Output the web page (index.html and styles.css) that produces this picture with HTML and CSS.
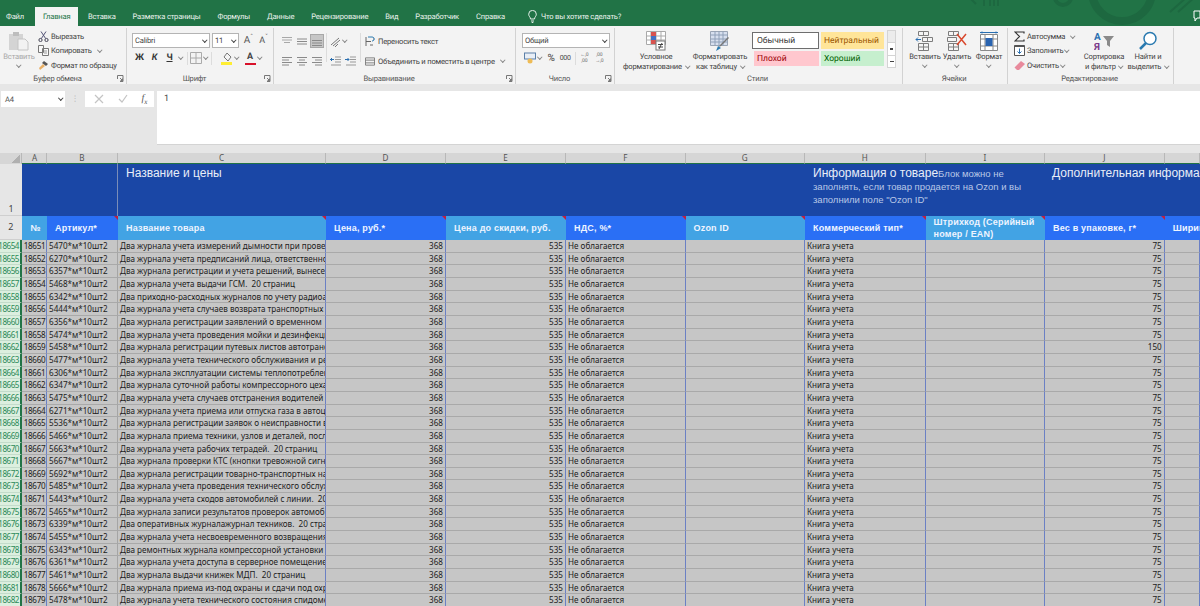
FILE: index.html
```html
<!DOCTYPE html>
<html lang="ru">
<head>
<meta charset="UTF-8">
<title>Excel - Главная</title>
<link rel="stylesheet" href="styles.css">
</head>
<body>
<svg class="defs" width="0" height="0">
  <symbol id="launch" viewBox="0 0 7 7"><path d="M.5 4V.5h5.500v6H3M3 3l2.500 2.500M3.500 5.500h2v-2" fill="none" stroke="#777"/></symbol>
  <symbol id="lines-l" viewBox="0 0 12 10"><path d="M1 1.500h10M1 4h7M1 6.500h10M1 9h7" stroke="#8a8a8a" fill="none"/></symbol>
  <symbol id="lines-c" viewBox="0 0 12 10"><path d="M1 1.500h10M3 4h6M1 6.500h10M3 9h6" stroke="#8a8a8a" fill="none"/></symbol>
  <symbol id="lines-r" viewBox="0 0 12 10"><path d="M1 1.500h10M4 4h7M1 6.500h10M4 9h7" stroke="#8a8a8a" fill="none"/></symbol>
</svg>

<div class="top">
  <svg class="top-art" width="1200" height="26">
    <g fill="none" stroke="#1d6840">
      <circle cx="1122" cy="-9" r="30" stroke-width="8"/>
      <circle cx="1063" cy="-3" r="8" stroke-width="4"/>
      <path d="M970-2l6 6M984 6V-2M990 6V-2M994 6V-2M998 6V-2M1170 12l18-16M1178 12l18-16" stroke-width="2"/>
    </g>
    <path d="M1194 11h6v7h-3l-2 3v-3h-1z" fill="none" stroke="#fff"/>
  </svg>
  <nav class="tabs">
    <span class="tab tab-file">Файл</span>
    <span class="tab active">Главная</span>
    <span class="tab">Вставка</span>
    <span class="tab">Разметка страницы</span>
    <span class="tab">Формулы</span>
    <span class="tab">Данные</span>
    <span class="tab">Рецензирование</span>
    <span class="tab">Вид</span>
    <span class="tab">Разработчик</span>
    <span class="tab">Справка</span>
    <span class="tab tab-tell">
      <svg width="9" height="13" viewBox="0 0 9 13"><path d="M2.500 9C2.500 7 .7 6.500.7 4.200a3.800 3.800 0 0 1 7.600 0C8.300 6.500 6.500 7 6.500 9zM3 11h3M3.700 12.500h1.600" fill="none" stroke="#e6f0ea"/></svg>
      Что вы хотите сделать?
    </span>
  </nav>
</div>

<div class="ribbon">
  <section class="group g-clip">
    <div class="group-body">
      <div class="big paste">
        <svg width="22" height="20" viewBox="0 0 22 20"><rect x="1" y="3" width="14" height="16" fill="#d4d4d4"/><rect x="5" y="1" width="6" height="4" fill="#bdbdbd"/><path d="M10 8h7l3 3v8H10z" fill="#f2f2f2" stroke="#c4c4c4"/></svg>
        <span>Вставить</span>
        <i class="caret"></i>
      </div>
      <div class="small-col">
        <div class="small">
          <svg width="11" height="11" viewBox="0 0 11 11"><circle cx="2.500" cy="9" r="1.600" fill="none" stroke="#445"/><circle cx="8.500" cy="9" r="1.600" fill="none" stroke="#445"/><path d="M3.300 7.600L8 .5M7.700 7.600L3 .5" stroke="#557" fill="none"/></svg>
          Вырезать
        </div>
        <div class="small">
          <svg width="11" height="11" viewBox="0 0 11 11"><path d="M.5.500h5v7h-5zM4.500 3.500h6v7h-6z" fill="#f8f8f8" stroke="#777"/><path d="M6 6h3M6 8h3" stroke="#999"/></svg>
          Копировать <i class="caret gap"></i>
        </div>
        <div class="small">
          <svg width="11" height="11" viewBox="0 0 11 11"><path d="M6 1l4 3-2 2-4-3z" fill="#555"/><path d="M5 4L1 8l1 2 5-4z" fill="#e9b066"/></svg>
          Формат по образцу
        </div>
      </div>
    </div>
    <div class="group-foot"><span>Буфер обмена</span><svg class="launch"><use href="#launch"/></svg></div>
  </section>

  <section class="group g-font">
    <div class="group-body stack">
      <div class="line">
        <div class="combo font-name">Calibri<i class="caret dark"></i></div>
        <div class="combo font-size">11<i class="caret dark"></i></div>
        <span class="grow">A<sup>ˆ</sup></span>
        <span class="grow small-a">A<sup>ˇ</sup></span>
      </div>
      <div class="line line-tools">
        <b class="tool">Ж</b>
        <b class="tool it">К</b>
        <b class="tool un">Ч</b><i class="caret"></i>
        <i class="sep"></i>
        <svg width="12" height="12" viewBox="0 0 12 12"><path d="M.5.500h11v11H.500zM6 .5v11M.5 6h11" fill="none" stroke="#aaa"/></svg><i class="caret"></i>
        <i class="sep"></i>
        <svg class="ml" width="12" height="13" viewBox="0 0 12 13"><path d="M6 1l4 4-3 4-4-4z" fill="#f4f4f4" stroke="#777"/><rect y="10" width="11" height="3" fill="#ffee33"/></svg><i class="caret"></i>
        <span class="font-color">A</span><i class="caret"></i>
      </div>
    </div>
    <div class="group-foot"><span>Шрифт</span><svg class="launch"><use href="#launch"/></svg></div>
  </section>

  <section class="group g-align">
    <div class="group-body g-align-body">
      <div class="align-grid">
        <svg width="12" height="10"><path d="M1 1.500h10M1 4h10M3 6.500h6" stroke="#a8a8a8"/></svg>
        <svg width="12" height="10"><path d="M1 3h10M1 5.500h10M1 8h10" stroke="#8a8a8a"/></svg>
        <span class="align-on"><svg width="10" height="10"><path d="M0 4.500h10M0 7h10M0 9.500h10" stroke="#8a8a8a"/></svg></span>
        <svg width="12" height="10"><use href="#lines-l"/></svg>
        <svg width="12" height="10"><use href="#lines-c"/></svg>
        <svg width="12" height="10"><use href="#lines-r"/></svg>
      </div>
      <i class="sep tall"></i>
      <div class="indent-grid">
        <div class="orient"><svg width="11" height="11" viewBox="0 0 11 11"><path d="M1 9l8-7M3 10l7-6M5 11l3-3" stroke="#777" fill="none"/></svg><i class="caret"></i></div>
        <div class="indents">
          <svg width="11" height="10" viewBox="0 0 11 10"><path d="M5 1h6M5 3.500h6M5 6h6M1 9h10" stroke="#999"/><path d="M4 3.500H0M2 2L.5 3.500 2 5" stroke="#2a6fb0" fill="none"/></svg>
          <svg width="11" height="10" viewBox="0 0 11 10"><path d="M5 1h6M5 3.500h6M5 6h6M1 9h10" stroke="#999"/><path d="M0 3.500h4M2.500 2L4 3.500 2.500 5" stroke="#2a6fb0" fill="none"/></svg>
        </div>
      </div>
      <i class="sep tall"></i>
      <div class="small-col wide">
        <div class="small"><svg width="10" height="11" viewBox="0 0 10 11"><path d="M1 1v9M1 5.500h5M8 3h1M5 9h3" stroke="#666" fill="none"/><path d="M3 1h4c3 0 3 4 0 4" stroke="#2a7ab0" fill="none"/></svg>Переносить текст</div>
        <div class="small"><svg width="10" height="11" viewBox="0 0 11 11"><path d="M.5 1.500h10v8H.500zM.5 4h10M.5 7h10" fill="none" stroke="#777"/></svg>Объединить и поместить в центре <i class="caret gap"></i></div>
      </div>
    </div>
    <div class="group-foot"><span>Выравнивание</span><svg class="launch"><use href="#launch"/></svg></div>
  </section>

  <section class="group g-num">
    <div class="group-body stack">
      <div class="line"><div class="combo num-format">Общий<i class="caret dark"></i></div></div>
      <div class="line line-num">
        <svg width="12" height="12" viewBox="0 0 12 12"><rect x=".5" y="1" width="11" height="6" fill="#e8eef6" stroke="#5a7fa8"/><circle cx="6" cy="9" r="2.500" fill="#eebb55"/></svg><i class="caret"></i>
        <span class="pct">%</span>
        <span class="thou">000</span>
        <i class="sep"></i>
        <span class="dec">←,0<br>,00</span>
        <span class="dec">,00<br>→,0</span>
      </div>
    </div>
    <div class="group-foot"><span>Число</span><svg class="launch"><use href="#launch"/></svg></div>
  </section>

  <section class="group g-styles">
    <div class="group-body">
      <div class="big cond">
        <svg width="20" height="20" viewBox="0 0 20 20"><path d="M.5.500h19v13H.500zM5 .5v13M10 .5v13M15 .5v13M.5 5h19M.5 9h19" fill="#fff" stroke="#a9a9a9"/><rect x="5" y="1" width="5" height="4" fill="#d9534f"/><rect x="5" y="5" width="5" height="4" fill="#4472c4"/><rect x="5" y="9" width="5" height="4" fill="#d9534f"/><rect x="10" y="10" width="9" height="9" fill="#fff" stroke="#777"/><path d="M12 13.500h5M12 16h5M16 12l-3 6" stroke="#444" fill="none"/></svg>
        <span>Условное</span>
        <span>форматирование <i class="caret"></i></span>
      </div>
      <div class="big table-fmt">
        <svg width="20" height="20" viewBox="0 0 20 20"><path d="M.5.500h17v14H.500z" fill="#d7dfee" stroke="#9aa5b5"/><path d="M.5 4h17M.5 8h17M.5 11h17M5 .5v14M9 .5v14M13 .5v14" stroke="#8fa0b8" fill="none"/><path d="M19 7l-8 8-2 1 1-2 8-8z" fill="#777"/><path d="M8 15l3 2-5 3z" fill="#2a7ab0"/></svg>
        <span>Форматировать</span>
        <span>как таблицу <i class="caret"></i></span>
      </div>
      <div class="style-grid">
        <div class="st st-normal">Обычный</div>
        <div class="st st-neutral">Нейтральный</div>
        <div class="st st-bad">Плохой</div>
        <div class="st st-good">Хороший</div>
      </div>
      <div class="style-scroll"><i class="up"></i><i class="dn"></i><i class="more"></i></div>
    </div>
    <div class="group-foot center"><span>Стили</span></div>
  </section>

  <section class="group g-cells">
    <div class="group-body">
      <div class="big cell-btn">
        <svg width="20" height="20" viewBox="0 0 20 20"><path d="M3.500.5h10v4h-10zM8.500.5v4M7.500 6.500h10v4h-10zM12.500 6.500v4M3.500 12.500h10v7h-10zM3.500 16h10M8.500 12.500v7" fill="#f5f5f5" stroke="#7d7d7d"/><path d="M6 8.500H1M3 6.500l-2 2 2 2" stroke="#2a6fb0" fill="none"/></svg>
        <span>Вставить</span>
        <i class="caret"></i>
      </div>
      <div class="big cell-btn">
        <svg width="20" height="20" viewBox="0 0 20 20"><path d="M1.500.5h10v4h-10zM6.500.5v4M.5 6.500h9v4h-9zM1.500 12.500h10v7h-10zM1.500 16h10M6.500 12.500v7" fill="#f5f5f5" stroke="#7d7d7d"/><path d="M10 3l9 11M19 3l-9 11" stroke="#d9492e" stroke-width="1.500"/></svg>
        <span>Удалить</span>
        <i class="caret"></i>
      </div>
      <div class="big cell-btn">
        <svg width="20" height="20" viewBox="0 0 20 20"><path d="M1 1.500h18M3 .5v2M17 .5v2" stroke="#2a6fb0"/><path d="M1.500 3.500h17v16h-17zM6 3.500v16M14 3.500v16M1.500 8h17M1.500 15h17" fill="#fff" stroke="#8a8a8a"/><rect x="6.500" y="7" width="7" height="8" fill="#2a64b0"/></svg>
        <span>Формат</span>
        <i class="caret"></i>
      </div>
    </div>
    <div class="group-foot center"><span>Ячейки</span></div>
  </section>

  <section class="group g-edit">
    <div class="group-body">
      <div class="small-col edit-col">
        <div class="small"><svg width="11" height="11" viewBox="0 0 11 11"><path d="M10 2.500V1H1l4.500 4.500L1 10h9V8.500" fill="none" stroke="#333" stroke-width="1.200"/></svg>Автосумма <i class="caret gap"></i></div>
        <div class="small"><svg width="11" height="11" viewBox="0 0 11 11"><path d="M.5.500h10v10H.500z" fill="#fff" stroke="#555"/><path d="M.5.500h10V2H.500z" fill="#555"/><path d="M5.500 3.500v5M3.500 6.500l2 2 2-2" fill="none" stroke="#2a6fb0"/></svg>Заполнить <i class="caret"></i></div>
        <div class="small"><svg width="11" height="11" viewBox="0 0 11 11"><path d="M7 1l4 3-6 6H3L.5 7.500z" fill="#e88a9c"/></svg>Очистить <i class="caret"></i></div>
      </div>
      <div class="big sort">
        <svg width="20" height="20" viewBox="0 0 20 20"><text x="0" y="9" class="az a">А</text><text x="0" y="19" class="az z">Я</text><path d="M9 5h11l-4 5v6l-3-2v-4z" fill="#8a8a8a"/></svg>
        <span>Сортировка</span>
        <span>и фильтр <i class="caret"></i></span>
      </div>
      <div class="big find">
        <svg width="20" height="20" viewBox="0 0 20 20"><circle cx="12" cy="7.500" r="6" fill="#fff" stroke="#2a7ab0" stroke-width="1.500"/><path d="M8 12l-6 6" stroke="#2a7ab0" stroke-width="2.500"/></svg>
        <span>Найти и</span>
        <span>выделить <i class="caret"></i></span>
      </div>
    </div>
    <div class="group-foot center"><span>Редактирование</span></div>
  </section>
</div>

<div class="formula-bar">
  <div class="name-box">A4<i class="caret dark"></i></div>
  <div class="dots">⋮</div>
  <div class="fx-buttons">
    <svg width="10" height="10"><path d="M1 1l8 8M9 1L1 9" stroke="#c4c4c4" stroke-width="1.200"/></svg>
    <svg width="10" height="10"><path d="M1 5l3 3 5-7" stroke="#c4c4c4" stroke-width="1.200" fill="none"/></svg>
    <span class="fx">f<sub>x</sub></span>
  </div>
  <div class="formula-input">1</div>
</div>

<div class="sheet">
  <div class="row heads">
    <span class="corner"></span><span>A</span><span>B</span><span>C</span><span>D</span><span>E</span><span>F</span><span>G</span><span>H</span><span>I</span><span>J</span><span></span>
  </div>
  <div class="row band">
    <span class="rh-plain">1</span>
    <span class="band-cell band-ab"></span>
    <span class="band-cell band-c">Название и цены</span>
    <span class="band-cell band-h">Информация о товаре<small>Блок можно не заполнять, если товар продается на Ozon и вы заполнили поле "Ozon ID"</small></span>
    <span class="band-cell band-j">Дополнительная информация</span>
  </div>
  <div class="row fields">
    <span class="rh-plain">2</span>
    <span class="fld light ctr">№</span>
    <span class="fld note">Артикул*</span>
    <span class="fld light note">Название товара</span>
    <span class="fld note">Цена, руб.*</span>
    <span class="fld light note">Цена до скидки, руб.</span>
    <span class="fld note">НДС, %*</span>
    <span class="fld light note">Ozon ID</span>
    <span class="fld note">Коммерческий тип*</span>
    <span class="fld light note two">Штрихкод (Серийный номер / EAN)</span>
    <span class="fld note">Вес в упаковке, г*</span>
    <span class="fld">Ширина</span>
  </div>
  <div class="row"><b>18654</b><span>18651</span><span>5470*м*10шт2</span><span>Два журнала учета измерений дымности при проверке</span><span class="n">368</span><span class="n">535</span><span>Не облагается</span><span></span><span>Книга учета</span><span></span><span class="n">75</span><span></span></div>
  <div class="row"><b>18655</b><span>18652</span><span>6270*м*10шт2</span><span>Два журнала учета предписаний лица, ответственного</span><span class="n">368</span><span class="n">535</span><span>Не облагается</span><span></span><span>Книга учета</span><span></span><span class="n">75</span><span></span></div>
  <div class="row"><b>18656</b><span>18653</span><span>6357*м*10шт2</span><span>Два журнала регистрации и учета решений, вынесенных</span><span class="n">368</span><span class="n">535</span><span>Не облагается</span><span></span><span>Книга учета</span><span></span><span class="n">75</span><span></span></div>
  <div class="row"><b>18657</b><span>18654</span><span>5468*м*10шт2</span><span>Два журнала учета выдачи ГСМ.  20 страниц</span><span class="n">368</span><span class="n">535</span><span>Не облагается</span><span></span><span>Книга учета</span><span></span><span class="n">75</span><span></span></div>
  <div class="row"><b>18658</b><span>18655</span><span>6342*м*10шт2</span><span>Два приходно-расходных журналов по учету радиоактивных</span><span class="n">368</span><span class="n">535</span><span>Не облагается</span><span></span><span>Книга учета</span><span></span><span class="n">75</span><span></span></div>
  <div class="row"><b>18659</b><span>18656</span><span>5444*м*10шт2</span><span>Два журнала учета случаев возврата транспортных средств</span><span class="n">368</span><span class="n">535</span><span>Не облагается</span><span></span><span>Книга учета</span><span></span><span class="n">75</span><span></span></div>
  <div class="row"><b>18660</b><span>18657</span><span>6356*м*10шт2</span><span>Два журнала регистрации заявлений о временном</span><span class="n">368</span><span class="n">535</span><span>Не облагается</span><span></span><span>Книга учета</span><span></span><span class="n">75</span><span></span></div>
  <div class="row"><b>18661</b><span>18658</span><span>5474*м*10шт2</span><span>Два журнала учета проведения мойки и дезинфекции</span><span class="n">368</span><span class="n">535</span><span>Не облагается</span><span></span><span>Книга учета</span><span></span><span class="n">75</span><span></span></div>
  <div class="row"><b>18662</b><span>18659</span><span>5458*м*10шт2</span><span>Два журнала регистрации путевых листов автотранспорта</span><span class="n">368</span><span class="n">535</span><span>Не облагается</span><span></span><span>Книга учета</span><span></span><span class="n">150</span><span></span></div>
  <div class="row"><b>18663</b><span>18660</span><span>5477*м*10шт2</span><span>Два журнала учета технического обслуживания и ремонта</span><span class="n">368</span><span class="n">535</span><span>Не облагается</span><span></span><span>Книга учета</span><span></span><span class="n">75</span><span></span></div>
  <div class="row"><b>18664</b><span>18661</span><span>6306*м*10шт2</span><span>Два журнала эксплуатации системы теплопотребления</span><span class="n">368</span><span class="n">535</span><span>Не облагается</span><span></span><span>Книга учета</span><span></span><span class="n">75</span><span></span></div>
  <div class="row"><b>18665</b><span>18662</span><span>6347*м*10шт2</span><span>Два журнала суточной работы компрессорного цеха</span><span class="n">368</span><span class="n">535</span><span>Не облагается</span><span></span><span>Книга учета</span><span></span><span class="n">75</span><span></span></div>
  <div class="row"><b>18666</b><span>18663</span><span>5475*м*10шт2</span><span>Два журнала учета случаев отстранения водителей</span><span class="n">368</span><span class="n">535</span><span>Не облагается</span><span></span><span>Книга учета</span><span></span><span class="n">75</span><span></span></div>
  <div class="row"><b>18667</b><span>18664</span><span>6271*м*10шт2</span><span>Два журнала учета приема или отпуска газа в автоцистерны</span><span class="n">368</span><span class="n">535</span><span>Не облагается</span><span></span><span>Книга учета</span><span></span><span class="n">75</span><span></span></div>
  <div class="row"><b>18668</b><span>18665</span><span>5536*м*10шт2</span><span>Два журнала регистрации заявок о неисправности в</span><span class="n">368</span><span class="n">535</span><span>Не облагается</span><span></span><span>Книга учета</span><span></span><span class="n">75</span><span></span></div>
  <div class="row"><b>18669</b><span>18666</span><span>5466*м*10шт2</span><span>Два журнала приема техники, узлов и деталей, после</span><span class="n">368</span><span class="n">535</span><span>Не облагается</span><span></span><span>Книга учета</span><span></span><span class="n">75</span><span></span></div>
  <div class="row"><b>18670</b><span>18667</span><span>5663*м*10шт2</span><span>Два журнала учета рабочих тетрадей.  20 страниц</span><span class="n">368</span><span class="n">535</span><span>Не облагается</span><span></span><span>Книга учета</span><span></span><span class="n">75</span><span></span></div>
  <div class="row"><b>18671</b><span>18668</span><span>5667*м*10шт2</span><span>Два журнала проверки КТС (кнопки тревожной сигнализации)</span><span class="n">368</span><span class="n">535</span><span>Не облагается</span><span></span><span>Книга учета</span><span></span><span class="n">75</span><span></span></div>
  <div class="row"><b>18672</b><span>18669</span><span>5692*м*10шт2</span><span>Два журнала регистрации товарно-транспортных накладных</span><span class="n">368</span><span class="n">535</span><span>Не облагается</span><span></span><span>Книга учета</span><span></span><span class="n">75</span><span></span></div>
  <div class="row"><b>18673</b><span>18670</span><span>5485*м*10шт2</span><span>Два журнала учета проведения технического обслуживания</span><span class="n">368</span><span class="n">535</span><span>Не облагается</span><span></span><span>Книга учета</span><span></span><span class="n">75</span><span></span></div>
  <div class="row"><b>18674</b><span>18671</span><span>5443*м*10шт2</span><span>Два журнала учета сходов автомобилей с линии.  20 страниц</span><span class="n">368</span><span class="n">535</span><span>Не облагается</span><span></span><span>Книга учета</span><span></span><span class="n">75</span><span></span></div>
  <div class="row"><b>18675</b><span>18672</span><span>5465*м*10шт2</span><span>Два журнала записи результатов проверок автомобилей</span><span class="n">368</span><span class="n">535</span><span>Не облагается</span><span></span><span>Книга учета</span><span></span><span class="n">75</span><span></span></div>
  <div class="row"><b>18676</b><span>18673</span><span>6339*м*10шт2</span><span>Два оперативных журналажурнал техников.  20 страниц</span><span class="n">368</span><span class="n">535</span><span>Не облагается</span><span></span><span>Книга учета</span><span></span><span class="n">75</span><span></span></div>
  <div class="row"><b>18677</b><span>18674</span><span>5455*м*10шт2</span><span>Два журнала учета несвоевременного возвращения</span><span class="n">368</span><span class="n">535</span><span>Не облагается</span><span></span><span>Книга учета</span><span></span><span class="n">75</span><span></span></div>
  <div class="row"><b>18678</b><span>18675</span><span>6343*м*10шт2</span><span>Два ремонтных журнала компрессорной установки</span><span class="n">368</span><span class="n">535</span><span>Не облагается</span><span></span><span>Книга учета</span><span></span><span class="n">75</span><span></span></div>
  <div class="row"><b>18679</b><span>18676</span><span>6361*м*10шт2</span><span>Два журнала учета доступа в серверное помещение</span><span class="n">368</span><span class="n">535</span><span>Не облагается</span><span></span><span>Книга учета</span><span></span><span class="n">75</span><span></span></div>
  <div class="row"><b>18680</b><span>18677</span><span>5461*м*10шт2</span><span>Два журнала выдачи книжек МДП.  20 страниц</span><span class="n">368</span><span class="n">535</span><span>Не облагается</span><span></span><span>Книга учета</span><span></span><span class="n">75</span><span></span></div>
  <div class="row"><b>18681</b><span>18678</span><span>5666*м*10шт2</span><span>Два журнала приема из-под охраны и сдачи под охрану</span><span class="n">368</span><span class="n">535</span><span>Не облагается</span><span></span><span>Книга учета</span><span></span><span class="n">75</span><span></span></div>
  <div class="row"><b>18682</b><span>18679</span><span>5478*м*10шт2</span><span>Два журнала учета технического состояния спидометров</span><span class="n">368</span><span class="n">535</span><span>Не облагается</span><span></span><span>Книга учета</span><span></span><span class="n">75</span><span></span></div>
</div>
</body>
</html>
```
FILE: styles.css
```css
html, body {
  margin: 0;
  height: 606px;
  overflow: hidden;
}
body {
  width: 1200px;
  background-color: #e6e6e6;
  font-family: Roboto, sans-serif;
  font-size: 7.6px;
  letter-spacing: -.2px;
  color: #444;
  text-rendering: geometricPrecision;
}
.defs {
  display: block;
  height: 0;
}
i {
  font-style: normal;
}

/* title + tabs */
.top {
  position: relative;
  height: 26px;
  background-color: #217346;
  overflow: hidden;
}
.top-art {
  position: absolute;
  left: 0;
  top: 0;
}
.tabs {
  position: relative;
  display: flex;
  padding: 7px 0 0 0;
  height: 19px;
}
.tab {
  display: flex;
  align-items: center;
  gap: 4px;
  padding: 0 8.5px;
  color: #e9f2ec;
}
.tab-file {
  padding: 0 11px 0 6px;
}
.tab.active {
  background-color: #f3f3f3;
  color: #217346;
  padding: 0 8px;
  margin-right: 1px;
}
.tab-tell {
  margin-left: 6px;
}

/* ribbon */
.ribbon {
  display: flex;
  height: 58px;
  background-color: #f3f3f3;
}
.group {
  display: flex;
  flex: none;
  flex-direction: column;
  box-sizing: border-box;
  height: 56px;
  margin-top: 2px;
  border-right: 1px solid #d2d2d2;
}
.g-clip { width: 127px; }
.g-font { width: 147px; }
.g-align { width: 242px; }
.g-num { width: 99px; }
.g-styles { width: 288px; }
.g-cells { width: 105px; }
.g-edit { width: 166px; }
.group-body {
  display: flex;
  flex: 1;
  min-height: 0;
}
.group-foot {
  display: flex;
  align-items: center;
  height: 11px;
  padding-right: 2px;
  color: #555;
}
.group-foot span {
  flex: 1;
  text-align: center;
}
.launch {
  width: 7px;
  height: 7px;
  margin-left: 2px;
}
.caret {
  display: inline-block;
  width: 2.5px;
  height: 2.5px;
  margin: 0 1px 2px 2px;
  border-right: 1px solid #888;
  border-bottom: 1px solid #888;
  transform: rotate(45deg);
  flex: none;
}
.caret.gap {
  margin-left: 6px;
}
.caret.dark {
  margin-left: auto;
  margin-right: 3px;
  border-color: #444;
}
.big {
  display: flex;
  flex: none;
  flex-direction: column;
  align-items: center;
  padding-top: 3px;
  line-height: 10px;
  white-space: nowrap;
}
.big svg {
  margin-bottom: 1px;
}
.big .caret {
  margin: 1px 0 0 0;
}
.big span .caret {
  margin: 0 0 2px 2px;
}
.paste {
  width: 34px;
  margin-left: 2px;
  color: #a8a8a8;
}
.small-col {
  display: flex;
  flex: none;
  flex-direction: column;
}
.small {
  display: flex;
  align-items: center;
  height: 14.5px;
  white-space: nowrap;
}
.small svg {
  flex: none;
  margin-right: 2px;
}
.g-clip .small-col {
  margin-left: 2px;
  padding-top: 1px;
}

/* font */
.stack {
  flex-direction: column;
}
.line {
  display: flex;
  align-items: center;
}
.combo {
  display: flex;
  align-items: center;
  box-sizing: border-box;
  height: 15px;
  padding-left: 2px;
  background-color: #fff;
  border: 1px solid #b4b4b4;
}
.g-font .line:first-child {
  padding: 5px 0 0 5px;
}
.g-num .line:first-child {
  padding: 5px 0 0 6px;
}
.font-name { width: 78px; }
.font-size { width: 27px; margin-left: 2px; }
.grow {
  width: 15px;
  text-align: center;
  font-size: 10px;
  color: #555;
}
.g-font .grow:nth-child(3) {
  margin-left: 2px;
}
.grow sup {
  font-size: 7px;
  line-height: 0;
}
.grow.small-a {
  font-size: 9px;
}
.line-tools {
  height: 12px;
  margin-top: 4px;
  padding-left: 5px;
}
.tool {
  width: 15px;
  text-align: center;
  font-size: 9px;
  color: #333;
}
.tool.it {
  font-style: italic;
}
.tool.un {
  text-decoration: underline;
}
.sep {
  display: block;
  flex: none;
  width: 1px;
  height: 13px;
  margin: 0 2px 0 3px;
  background-color: #dcdcdc;
}
.sep.tall {
  height: 29px;
  margin: 5px 0 0 0;
}
.ml {
  margin-left: 7px;
}
.font-color {
  margin-left: 5px;
  width: 11px;
  text-align: center;
  font-size: 9px;
  font-weight: bold;
  line-height: 11px;
  color: #444;
  border-bottom: 2px solid #d8112a;
}

/* alignment */
.g-align-body {
  padding-left: 3px;
}
.align-grid {
  display: grid;
  flex: none;
  grid-template-columns: repeat(3, 15px);
  grid-auto-rows: 20px;
  justify-items: center;
  align-items: center;
  width: 47px;
  padding: 3px 0 0 2px;
}
.align-on {
  display: flex;
  justify-content: center;
  align-items: center;
  width: 14px;
  height: 14px;
  background-color: #c6c6c6;
  border: 1px solid #a8a8a8;
  box-sizing: border-box;
}
.indent-grid {
  display: flex;
  flex: none;
  flex-direction: column;
  width: 30px;
  padding: 3px 0 0 3px;
}
.orient {
  display: flex;
  align-items: center;
  height: 20px;
}
.indents {
  display: flex;
  align-items: center;
  gap: 4px;
  height: 20px;
}
.small-col.wide {
  margin-left: 4px;
  padding-top: 3px;
}
.small-col.wide .small {
  height: 20px;
}
.small-col.wide svg {
  margin-right: 3px;
}

/* number */
.num-format {
  width: 88px;
}
.line-num {
  height: 12px;
  margin-top: 4px;
  padding-left: 8px;
}
.pct {
  margin-left: 5px;
  font-size: 10px;
}
.thou {
  margin-left: 5px;
  font-size: 7px;
}
.dec {
  width: 15px;
  font-size: 5px;
  line-height: 6px;
  text-align: center;
  color: #666;
}
.line-num .sep {
  margin: 0 1px 0 4px;
}

/* styles */
.g-styles .group-body {
  padding-left: 9px;
}
.big.cond,
.big.table-fmt {
  width: 64px;
}
.style-grid {
  display: grid;
  grid-template-columns: 67px 63px;
  grid-template-rows: 17px 15px;
  gap: 2px;
  margin-top: 4px;
}
.st {
  display: flex;
  align-items: center;
  padding-left: 3px;
  box-sizing: border-box;
  font-size: 8.5px;
  letter-spacing: 0;
}
.st-normal {
  background-color: #fff;
  border: 1px solid #6e6e6e;
  color: #333;
  padding-left: 4px;
}
.st-neutral {
  background-color: #ffe599;
  color: #9c5700;
}
.st-bad {
  background-color: #ffc7ce;
  color: #9c0006;
  margin-left: 2px;
}
.st-good {
  background-color: #c6efce;
  color: #006100;
}
.style-scroll {
  display: flex;
  flex-direction: column;
  box-sizing: border-box;
  width: 9px;
  height: 38px;
  margin: 2px 0 0 3px;
  border: 1px solid #d4d4d4;
  background-color: #fff;
}
.style-scroll i {
  flex: 1;
  border-bottom: 1px solid #d4d4d4;
}
.style-scroll .up {
  background-color: #ececec;
}
.style-scroll .dn {
  background: linear-gradient(#444, #444) center / 3px 2px no-repeat;
}
.style-scroll .more {
  border-bottom: 0;
  background: linear-gradient(#444, #444) center / 4px 1px no-repeat;
}

/* cells + editing */
.g-cells .group-body {
  padding-left: 6px;
}
.cell-btn {
  width: 32px;
}
.edit-col {
  width: 68px;
  margin-left: 6px;
  padding-top: 1px;
}
.sort {
  width: 44px;
}
.find {
  width: 44px;
}
.az {
  font-size: 10px;
  font-weight: bold;
}
.az.a { fill: #2a6fb0; }
.az.z { fill: #7a3a8a; }

/* formula bar */
.formula-bar {
  display: flex;
  align-items: flex-start;
  height: 55px;
  margin-top: 7px;
}
.name-box {
  display: flex;
  align-items: center;
  box-sizing: border-box;
  width: 64px;
  height: 16px;
  margin-left: 1px;
  padding-left: 4px;
  background-color: #fff;
  color: #555;
}
.dots {
  width: 20px;
  text-align: center;
  line-height: 16px;
  color: #aaa;
}
.fx-buttons {
  display: flex;
  align-items: center;
  justify-content: space-around;
  box-sizing: border-box;
  width: 69px;
  height: 16px;
  background-color: #fff;
  padding-left: 2px;
}
.fx {
  font-family: "Liberation Serif", serif;
  font-style: italic;
  font-size: 10px;
  color: #555;
}
.fx sub {
  font-size: 7px;
}
.formula-input {
  flex: 1;
  box-sizing: border-box;
  height: 54px;
  margin-left: 3px;
  padding: 3px 0 0 7px;
  background-color: #fff;
  border-bottom: 1px solid #d4d4d4;
  font-size: 9px;
  color: #444;
}

/* sheet */
.sheet {
  margin-top: 7px;
  font-family: "Noto Sans", sans-serif;
  font-size: 8.1px;
  letter-spacing: 0;
  text-rendering: auto;
}
.row {
  display: grid;
  grid-template-columns: 22px 25px 71px 208px 120px 120px 119.500px 119.500px 120.600px 119.400px 119.700px 35.300px;
  height: 12.670px;
  line-height: 12.670px;
  white-space: pre;
  color: #1c1c1c;
  background-color: #c6c6c6;
}
.row > span {
  box-sizing: border-box;
  overflow: hidden;
  padding-left: 2px;
  border-right: 1px solid #6b80c4;
  border-bottom: 1px solid #a9a9a9;
}
.row > span:nth-child(2) {
  padding-left: 1px;
  text-align: center;
  letter-spacing: -.3px;
}
.row > span:nth-child(3) {
  border-right-color: #a5a5a5;
}
.row > b {
  display: flex;
  justify-content: flex-end;
  overflow: hidden;
  padding-right: 1px;
  font-weight: normal;
  letter-spacing: -.5px;
  color: #2b8a57;
  background-color: #dcefdf;
  border-right: 2px solid #217346;
  border-bottom: 1px solid #c3dccb;
}
.row > .n {
  padding: 0 2px 0 0;
  text-align: right;
}

.heads {
  height: 11px;
  line-height: 10px;
  color: #555;
  background-color: #d6d6d6;
}
.heads > span {
  padding: 0;
  text-align: center;
  border-right: 1px solid #b8b8b8;
  border-bottom: 1px solid #217346;
}
.heads > span:nth-child(3) {
  border-right-color: #b8b8b8;
}
.heads > .corner {
  border-bottom: 0;
  background: linear-gradient(135deg, transparent 62%, #b0b0b0 63%) 6px 2px / 14px 8px no-repeat;
}

.band {
  height: 52px;
  line-height: normal;
  white-space: normal;
  background-color: #1a47a6;
  font-family: "Liberation Sans", sans-serif;
  color: #e8eef8;
}
.row > .rh-plain {
  padding: 0;
  display: flex;
  justify-content: center;
  align-items: flex-end;
  font-family: "Noto Sans", sans-serif;
  font-weight: normal;
  font-size: 9px;
  color: #444;
  background-color: #e6e6e6;
  border-right: 0;
  border-bottom: 1px solid #cfcfcf;
}
.band-cell {
  font-size: 12px;
  border: 0 !important;
  padding: 2px 0 0 8px !important;
}
.band-ab {
  grid-column: span 2;
  padding: 0 !important;
  border-right: 1px solid #7a8db8 !important;
}
.band-c {
  grid-column: span 5;
}
.band-h {
  grid-column: span 2;
  line-height: 12px;
  padding-top: 3px !important;
  padding-right: 5px !important;
}
.band-h small {
  font-size: 9.500px;
  color: #b9c8e6;
}
.band-j {
  grid-column: span 2;
  white-space: nowrap;
  padding-left: 7px !important;
}

.fields {
  height: 24px;
  line-height: 24px;
  font-family: "Liberation Sans", sans-serif;
  font-weight: bold;
  font-size: 9px;
  letter-spacing: .2px;
  color: #eef4ff;
  background-color: #2a6ff5;
}
.fields .fld {
  position: relative;
  padding-left: 8px;
  border: 0;
  white-space: nowrap;
  overflow: visible;
}
.fields .light {
  background-color: #42a3e4;
}
.fields .ctr {
  padding: 0;
  text-align: center;
}
.fields .two {
  white-space: normal;
  line-height: 12px;
}
.fields .note::after {
  content: "";
  position: absolute;
  top: 0;
  right: 0;
  border-top: 4px solid #c0203f;
  border-left: 4px solid transparent;
}
```
